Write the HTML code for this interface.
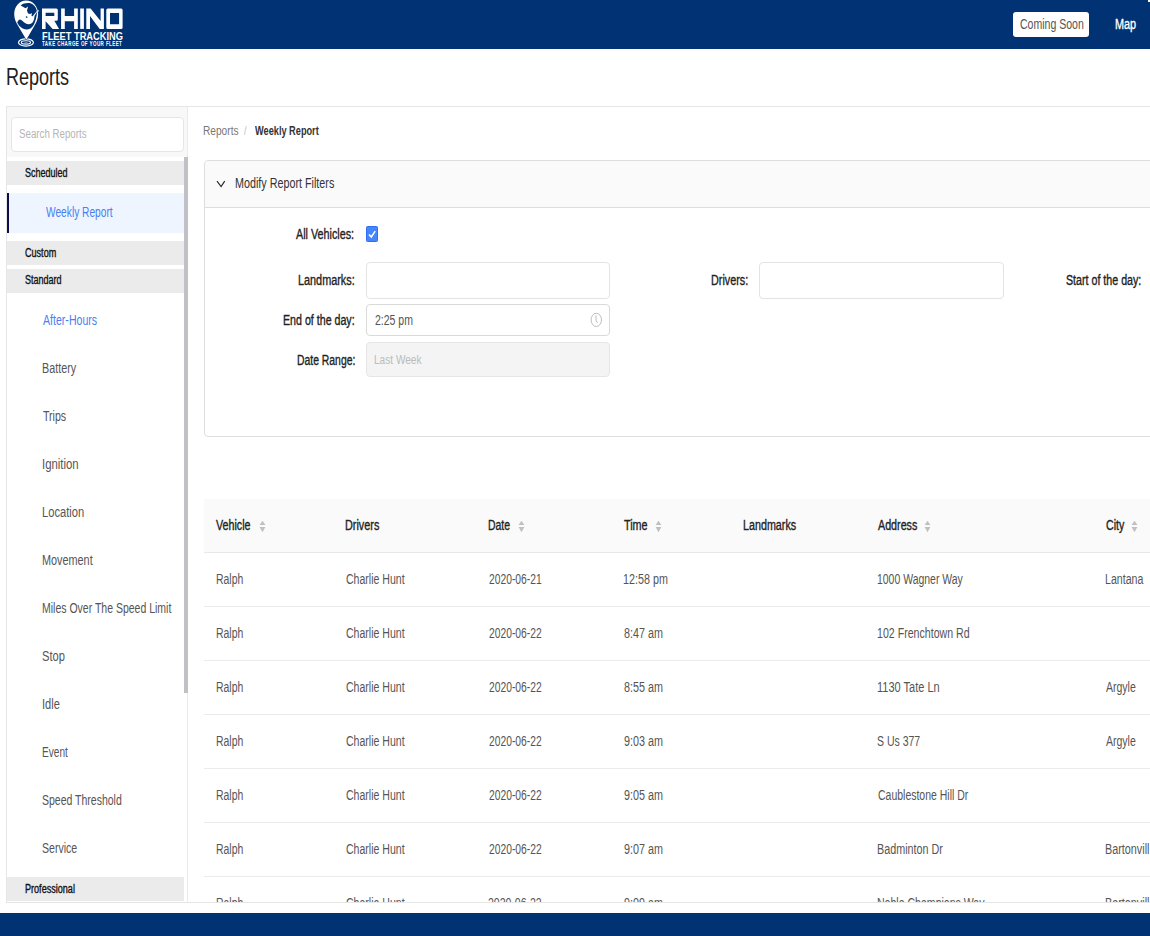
<!DOCTYPE html>
<html><head><meta charset="utf-8"><style>
html,body{margin:0;padding:0;}
body{width:1150px;height:936px;position:relative;overflow:hidden;background:#fff;font-family:"Liberation Sans",sans-serif;}
.t{position:absolute;white-space:pre;transform-origin:0 0;}
.b{position:absolute;box-sizing:border-box;}
</style></head><body>
<!-- header -->
<div class="b" style="left:0;top:0;width:1150px;height:49px;background:#003274"></div>
<svg style="position:absolute;left:0;top:0" width="140" height="48" viewBox="0 0 140 48">
  <g fill="none" stroke="#fff">
    <ellipse cx="25.95" cy="42.45" rx="7.45" ry="3.65" stroke-width="1.2"/>
    <ellipse cx="25.95" cy="42.4" rx="4.6" ry="1.7" stroke-width="1.1"/>
    <ellipse cx="26" cy="43.2" rx="1.8" ry="0.6" stroke-width="0.8" stroke="#8fa3c4"/>
  </g>
  <path d="M26.2 0.6 C33 0.6 38.1 6.5 38.1 14.2 C38.1 19 36.2 23 34 26.5 L26.3 39.7 L18.5 26.5 C16.3 23 14.2 19 14.2 14.2 C14.2 6.5 19.4 0.6 26.2 0.6 Z" fill="#fff" stroke="#003274" stroke-width="1" paint-order="stroke"/>
  <path d="M20.7 5.4 C23 3.5 27 2.7 30.5 3.3 C33.5 4.1 35.6 6.6 36.6 10 L36.9 10.9 L32.6 16.3 L31.5 16 L31.9 13.1 L30.3 14.1 L28 13.5 L27 10.6 L28.1 6.6 L25.5 8.3 Z" fill="#003274"/>
  <path d="M17.2 22.6 C17.8 21 18.8 19.7 20 19.5 C21.5 19.7 23 21.8 25 23 C27 24.3 29.5 24.6 31.3 23.6 C32.8 22.6 33.8 20.5 34.2 18.5 L34.6 15.8 L37.2 11.8 C36.6 17 35.6 21.5 33.8 24.8 C31.8 28.2 29.3 29.5 26.5 29.5 C22.5 29.5 18.9 26.3 17.2 22.6 Z" fill="#003274"/>
  <circle cx="26.6" cy="17" r="0.85" fill="#003274"/>
  <path d="M37 10.8 L38.9 9.9 L38.2 12 Z" fill="#fff"/>
  <g fill="#fff" fill-rule="evenodd">
    <path d="M42 8.5 H56.3 Q57.8 8.5 57.8 10 V19.3 Q57.8 20.8 56.3 20.8 H54.3 L59.1 28.9 H52.6 L45.6 21.2 V28.9 H42 Z M45.6 12.8 H54.3 V15.9 H45.6 Z"/>
    <path d="M61.1 8.5 H64.8 V15.9 H74.1 V8.5 H77.8 V28.9 H74.1 V21.3 H64.8 V28.9 H61.1 Z"/>
    <path d="M80.2 8.5 H83.9 V28.9 H80.2 Z"/>
    <path d="M86.3 8.5 H90.6 L100.6 21 V8.5 H103.9 V28.9 H99.7 L90 15.9 V28.9 H86.3 Z"/>
    <path d="M107.8 8.5 H121.1 Q122.6 8.5 122.6 10 V27.4 Q122.6 28.9 121.1 28.9 H107.8 Q106.3 28.9 106.3 27.4 V10 Q106.3 8.5 107.8 8.5 Z M110 13 V24.3 H119.1 V13 Z"/>
  </g>
</svg>
<div class="b" style="left:1013px;top:12px;width:76px;height:25px;background:#fff;border-radius:3px"></div>
<div class="b" style="left:1148px;top:0;width:2px;height:2px;background:#fff"></div>
<!-- page area borders -->
<div class="b" style="left:6px;top:106px;width:1150px;height:797px;border:1px solid #e6e6e6;"></div>
<!-- sidebar -->
<div class="b" style="left:7px;top:107px;width:181px;height:50px;background:#f8f8f8"></div>
<div class="b" style="left:11px;top:117px;width:173px;height:35px;background:#fff;border:1px solid #e6e6e6;border-radius:4px"></div>
<div class="b" style="left:187px;top:107px;width:1px;height:795px;background:#eaeaea"></div>
<div class="b" style="left:7px;top:161px;width:177px;height:24px;background:#ebebeb"></div>
<div class="b" style="left:7px;top:193px;width:177px;height:40px;background:#eef5fe;border-left:2px solid #0c0c4e"></div>
<div class="b" style="left:7px;top:241px;width:177px;height:24px;background:#ebebeb"></div>
<div class="b" style="left:7px;top:269px;width:177px;height:24px;background:#ebebeb"></div>
<div class="b" style="left:7px;top:877px;width:177px;height:24px;background:#ebebeb"></div>
<div class="b" style="left:184px;top:157px;width:4px;height:536px;background:#c1c1c5"></div>
<!-- filter panel -->
<div class="b" style="left:204px;top:160px;width:960px;height:277px;border:1px solid #dedede;border-radius:4px;background:#fff"></div>
<div class="b" style="left:205px;top:161px;width:960px;height:47px;background:#fafafa;border-bottom:1px solid #dedede;border-radius:4px 0 0 0"></div>
<svg style="position:absolute;left:215px;top:178px" width="12" height="12" viewBox="0 0 12 12"><path d="M2.0 3.1 L6.1 8.6 L9.7 3.1" fill="none" stroke="#222" stroke-width="1.1"/></svg>
<div class="b" style="left:366px;top:226px;width:12px;height:16px;background:#4785fb;border:1px solid #2f6ff7;border-radius:1.5px"></div>
<svg style="position:absolute;left:366px;top:226px" width="12" height="16" viewBox="0 0 12 16"><path d="M3 8.4 L5.3 11 L9.2 5.2" fill="none" stroke="#fff" stroke-width="1.5"/></svg>
<div class="b" style="left:366px;top:262px;width:244px;height:37px;border:1px solid #e3e3e3;border-radius:4px"></div>
<div class="b" style="left:759px;top:262px;width:245px;height:37px;border:1px solid #e3e3e3;border-radius:4px"></div>
<div class="b" style="left:366px;top:304px;width:244px;height:32px;border:1px solid #d9d9d9;border-radius:4px"></div>
<svg style="position:absolute;left:588px;top:311px" width="17" height="18" viewBox="0 0 17 18"><ellipse cx="8.3" cy="8.9" rx="5.2" ry="6.6" fill="none" stroke="#bdbdbd" stroke-width="1"/><path d="M8 4.5 V9.6 L9.6 12" fill="none" stroke="#bdbdbd" stroke-width="1"/></svg>
<div class="b" style="left:366px;top:342px;width:244px;height:35px;border:1px solid #e6e6e6;border-radius:4px;background:#f4f4f4"></div>
<!-- table -->
<div class="b" style="left:204px;top:499px;width:946px;height:54px;background:#fafafa;border-bottom:1px solid #e8e8e8"></div>
<div class="b" style="left:204px;top:606px;width:946px;height:1px;background:#ebebeb"></div>
<div class="b" style="left:204px;top:660px;width:946px;height:1px;background:#ebebeb"></div>
<div class="b" style="left:204px;top:714px;width:946px;height:1px;background:#ebebeb"></div>
<div class="b" style="left:204px;top:768px;width:946px;height:1px;background:#ebebeb"></div>
<div class="b" style="left:204px;top:822px;width:946px;height:1px;background:#ebebeb"></div>
<div class="b" style="left:204px;top:876px;width:946px;height:1px;background:#ebebeb"></div>
<svg style="position:absolute;left:258.6px;top:520px" width="7" height="13" viewBox="0 0 7 13"><path d="M0.6 5 L3.5 0.7 L6.4 5 Z M0.6 7 L6.4 7 L3.5 12.2 Z" fill="#c0c0c0"/></svg>
<svg style="position:absolute;left:517.5px;top:520px" width="7" height="13" viewBox="0 0 7 13"><path d="M0.6 5 L3.5 0.7 L6.4 5 Z M0.6 7 L6.4 7 L3.5 12.2 Z" fill="#c0c0c0"/></svg>
<svg style="position:absolute;left:655.1px;top:520px" width="7" height="13" viewBox="0 0 7 13"><path d="M0.6 5 L3.5 0.7 L6.4 5 Z M0.6 7 L6.4 7 L3.5 12.2 Z" fill="#c0c0c0"/></svg>
<svg style="position:absolute;left:924.2px;top:520px" width="7" height="13" viewBox="0 0 7 13"><path d="M0.6 5 L3.5 0.7 L6.4 5 Z M0.6 7 L6.4 7 L3.5 12.2 Z" fill="#c0c0c0"/></svg>
<svg style="position:absolute;left:1131.2px;top:520px" width="7" height="13" viewBox="0 0 7 13"><path d="M0.6 5 L3.5 0.7 L6.4 5 Z M0.6 7 L6.4 7 L3.5 12.2 Z" fill="#c0c0c0"/></svg>

<!-- clip bottom -->
<div class="b" style="left:188px;top:902px;width:962px;height:34px;background:#fff;z-index:5;border-top:1px solid #e6e6e6"></div>
<div class="b" style="left:0;top:913px;width:1150px;height:23px;background:#003274;z-index:6"></div>

<div class="t" id="t0" style="left:1020.00px;top:17.10px;font-size:14px;line-height:14px;font-weight:400;color:#555;transform:scaleX(0.7525);">Coming Soon</div>
<div class="t" id="t1" style="left:1115.20px;top:17.10px;font-size:14px;line-height:14px;font-weight:400;color:#fff;transform:scaleX(0.7755);-webkit-text-stroke:0.35px #fff;">Map</div>
<div class="t" id="t2" style="left:42.00px;top:30.62px;font-size:10.8px;line-height:10.8px;font-weight:700;color:#fff;transform:scaleX(0.8601);">FLEET TRACKING</div>
<div class="t" id="t3" style="left:42.10px;top:41.30px;font-size:6.7px;line-height:6.7px;font-weight:700;color:#fff;transform:scaleX(0.6759);letter-spacing:0.6px;">TAKE CHARGE OF YOUR FLEET</div>
<div class="t" id="t4" style="left:6.00px;top:65.30px;font-size:24px;line-height:24px;font-weight:400;color:#212121;transform:scaleX(0.7506);">Reports</div>
<div class="t" id="t5" style="left:19.00px;top:128.30px;font-size:12px;line-height:12px;font-weight:400;color:#b5b5b5;transform:scaleX(0.8105);">Search Reports</div>
<div class="t" id="t6" style="left:25.00px;top:166.50px;font-size:12px;line-height:12px;font-weight:400;color:#111;transform:scaleX(0.7500);-webkit-text-stroke:0.35px #111;">Scheduled</div>
<div class="t" id="t7" style="left:46.00px;top:205.10px;font-size:14px;line-height:14px;font-weight:400;color:#4a7ef2;transform:scaleX(0.7283);">Weekly Report</div>
<div class="t" id="t8" style="left:25.00px;top:246.70px;font-size:12px;line-height:12px;font-weight:400;color:#111;transform:scaleX(0.7554);-webkit-text-stroke:0.35px #111;">Custom</div>
<div class="t" id="t9" style="left:25.00px;top:274.30px;font-size:12px;line-height:12px;font-weight:400;color:#111;transform:scaleX(0.7500);-webkit-text-stroke:0.35px #111;">Standard</div>
<div class="t" id="t10" style="left:43.20px;top:312.90px;font-size:14px;line-height:14px;font-weight:400;color:#4a7ef2;transform:scaleX(0.7560);">After-Hours</div>
<div class="t" id="t11" style="left:42.20px;top:360.90px;font-size:14px;line-height:14px;font-weight:400;color:#555;transform:scaleX(0.7693);">Battery</div>
<div class="t" id="t12" style="left:43.20px;top:408.90px;font-size:14px;line-height:14px;font-weight:400;color:#555;transform:scaleX(0.7576);">Trips</div>
<div class="t" id="t13" style="left:42.20px;top:456.90px;font-size:14px;line-height:14px;font-weight:400;color:#555;transform:scaleX(0.8113);">Ignition</div>
<div class="t" id="t14" style="left:42.20px;top:504.90px;font-size:14px;line-height:14px;font-weight:400;color:#555;transform:scaleX(0.7977);">Location</div>
<div class="t" id="t15" style="left:42.20px;top:552.90px;font-size:14px;line-height:14px;font-weight:400;color:#555;transform:scaleX(0.7752);">Movement</div>
<div class="t" id="t16" style="left:42.20px;top:600.90px;font-size:14px;line-height:14px;font-weight:400;color:#555;transform:scaleX(0.7500);">Miles Over The Speed Limit</div>
<div class="t" id="t17" style="left:42.20px;top:648.90px;font-size:14px;line-height:14px;font-weight:400;color:#555;transform:scaleX(0.7957);">Stop</div>
<div class="t" id="t18" style="left:42.20px;top:696.90px;font-size:14px;line-height:14px;font-weight:400;color:#555;transform:scaleX(0.7891);">Idle</div>
<div class="t" id="t19" style="left:42.20px;top:744.90px;font-size:14px;line-height:14px;font-weight:400;color:#555;transform:scaleX(0.7212);">Event</div>
<div class="t" id="t20" style="left:42.20px;top:792.90px;font-size:14px;line-height:14px;font-weight:400;color:#555;transform:scaleX(0.7501);">Speed Threshold</div>
<div class="t" id="t21" style="left:42.20px;top:840.90px;font-size:14px;line-height:14px;font-weight:400;color:#555;transform:scaleX(0.7547);">Service</div>
<div class="t" id="t22" style="left:25.40px;top:882.70px;font-size:12px;line-height:12px;font-weight:400;color:#111;transform:scaleX(0.7562);-webkit-text-stroke:0.35px #111;">Professional</div>
<div class="t" id="t23" style="left:202.70px;top:124.50px;font-size:12px;line-height:12px;font-weight:400;color:#777;transform:scaleX(0.8453);">Reports</div>
<div class="t" id="t24" style="left:244.10px;top:124.50px;font-size:12px;line-height:12px;font-weight:400;color:#bbb;transform:scaleX(0.7500);">/</div>
<div class="t" id="t25" style="left:254.90px;top:124.50px;font-size:12px;line-height:12px;font-weight:700;color:#333;transform:scaleX(0.7670);">Weekly Report</div>
<div class="t" id="t26" style="left:234.80px;top:176.10px;font-size:14px;line-height:14px;font-weight:400;color:#333;transform:scaleX(0.7690);">Modify Report Filters</div>
<div class="t" id="t27" style="left:295.70px;top:226.90px;font-size:14px;line-height:14px;font-weight:400;color:#222;transform:scaleX(0.7688);-webkit-text-stroke:0.35px #222;">All Vehicles:</div>
<div class="t" id="t28" style="left:297.90px;top:272.50px;font-size:14px;line-height:14px;font-weight:400;color:#222;transform:scaleX(0.7757);-webkit-text-stroke:0.35px #222;">Landmarks:</div>
<div class="t" id="t29" style="left:283.10px;top:313.10px;font-size:14px;line-height:14px;font-weight:400;color:#222;transform:scaleX(0.7609);-webkit-text-stroke:0.35px #222;">End of the day:</div>
<div class="t" id="t30" style="left:296.80px;top:352.70px;font-size:14px;line-height:14px;font-weight:400;color:#222;transform:scaleX(0.7421);-webkit-text-stroke:0.35px #222;">Date Range:</div>
<div class="t" id="t31" style="left:375.00px;top:312.50px;font-size:14px;line-height:14px;font-weight:400;color:#555;transform:scaleX(0.7500);">2:25 pm</div>
<div class="t" id="t32" style="left:374.00px;top:353.80px;font-size:12px;line-height:12px;font-weight:400;color:#bbb;transform:scaleX(0.8415);">Last Week</div>
<div class="t" id="t33" style="left:711.00px;top:273.10px;font-size:14px;line-height:14px;font-weight:400;color:#222;transform:scaleX(0.7719);-webkit-text-stroke:0.35px #222;">Drivers:</div>
<div class="t" id="t34" style="left:1065.60px;top:273.00px;font-size:14px;line-height:14px;font-weight:400;color:#222;transform:scaleX(0.7622);-webkit-text-stroke:0.35px #222;">Start of the day:</div>
<div class="t" id="t35" style="left:216.00px;top:518.00px;font-size:14px;line-height:14px;font-weight:400;color:#222;transform:scaleX(0.7636);-webkit-text-stroke:0.35px #222;">Vehicle</div>
<div class="t" id="t36" style="left:344.60px;top:518.00px;font-size:14px;line-height:14px;font-weight:400;color:#222;transform:scaleX(0.7740);-webkit-text-stroke:0.35px #222;">Drivers</div>
<div class="t" id="t37" style="left:488.30px;top:518.00px;font-size:14px;line-height:14px;font-weight:400;color:#222;transform:scaleX(0.7441);-webkit-text-stroke:0.35px #222;">Date</div>
<div class="t" id="t38" style="left:624.10px;top:518.00px;font-size:14px;line-height:14px;font-weight:400;color:#222;transform:scaleX(0.7698);-webkit-text-stroke:0.35px #222;">Time</div>
<div class="t" id="t39" style="left:742.50px;top:518.00px;font-size:14px;line-height:14px;font-weight:400;color:#222;transform:scaleX(0.7678);-webkit-text-stroke:0.35px #222;">Landmarks</div>
<div class="t" id="t40" style="left:878.20px;top:518.00px;font-size:14px;line-height:14px;font-weight:400;color:#222;transform:scaleX(0.7660);-webkit-text-stroke:0.35px #222;">Address</div>
<div class="t" id="t41" style="left:1105.50px;top:518.00px;font-size:14px;line-height:14px;font-weight:400;color:#222;transform:scaleX(0.7592);-webkit-text-stroke:0.35px #222;">City</div>
<div class="t" id="t42" style="left:215.50px;top:572.10px;font-size:14px;line-height:14px;font-weight:400;color:#555;transform:scaleX(0.7447);">Ralph</div>
<div class="t" id="t43" style="left:345.60px;top:572.10px;font-size:14px;line-height:14px;font-weight:400;color:#555;transform:scaleX(0.7527);">Charlie Hunt</div>
<div class="t" id="t44" style="left:489.30px;top:572.10px;font-size:14px;line-height:14px;font-weight:400;color:#555;transform:scaleX(0.7358);">2020-06-21</div>
<div class="t" id="t45" style="left:623.10px;top:572.10px;font-size:14px;line-height:14px;font-weight:400;color:#555;transform:scaleX(0.7682);">12:58 pm</div>
<div class="t" id="t46" style="left:877.20px;top:572.10px;font-size:14px;line-height:14px;font-weight:400;color:#555;transform:scaleX(0.7465);">1000 Wagner Way</div>
<div class="t" id="t47" style="left:1104.50px;top:572.10px;font-size:14px;line-height:14px;font-weight:400;color:#555;transform:scaleX(0.7582);">Lantana</div>
<div class="t" id="t48" style="left:215.50px;top:626.10px;font-size:14px;line-height:14px;font-weight:400;color:#555;transform:scaleX(0.7447);">Ralph</div>
<div class="t" id="t49" style="left:345.60px;top:626.10px;font-size:14px;line-height:14px;font-weight:400;color:#555;transform:scaleX(0.7527);">Charlie Hunt</div>
<div class="t" id="t50" style="left:489.30px;top:626.10px;font-size:14px;line-height:14px;font-weight:400;color:#555;transform:scaleX(0.7358);">2020-06-22</div>
<div class="t" id="t51" style="left:624.10px;top:626.10px;font-size:14px;line-height:14px;font-weight:400;color:#555;transform:scaleX(0.7703);">8:47 am</div>
<div class="t" id="t52" style="left:877.20px;top:626.10px;font-size:14px;line-height:14px;font-weight:400;color:#555;transform:scaleX(0.7583);">102 Frenchtown Rd</div>
<div class="t" id="t53" style="left:215.50px;top:680.10px;font-size:14px;line-height:14px;font-weight:400;color:#555;transform:scaleX(0.7447);">Ralph</div>
<div class="t" id="t54" style="left:345.60px;top:680.10px;font-size:14px;line-height:14px;font-weight:400;color:#555;transform:scaleX(0.7527);">Charlie Hunt</div>
<div class="t" id="t55" style="left:489.30px;top:680.10px;font-size:14px;line-height:14px;font-weight:400;color:#555;transform:scaleX(0.7358);">2020-06-22</div>
<div class="t" id="t56" style="left:624.10px;top:680.10px;font-size:14px;line-height:14px;font-weight:400;color:#555;transform:scaleX(0.7703);">8:55 am</div>
<div class="t" id="t57" style="left:877.20px;top:680.10px;font-size:14px;line-height:14px;font-weight:400;color:#555;transform:scaleX(0.7863);">1130 Tate Ln</div>
<div class="t" id="t58" style="left:1105.50px;top:680.10px;font-size:14px;line-height:14px;font-weight:400;color:#555;transform:scaleX(0.7506);">Argyle</div>
<div class="t" id="t59" style="left:215.50px;top:734.10px;font-size:14px;line-height:14px;font-weight:400;color:#555;transform:scaleX(0.7447);">Ralph</div>
<div class="t" id="t60" style="left:345.60px;top:734.10px;font-size:14px;line-height:14px;font-weight:400;color:#555;transform:scaleX(0.7527);">Charlie Hunt</div>
<div class="t" id="t61" style="left:489.30px;top:734.10px;font-size:14px;line-height:14px;font-weight:400;color:#555;transform:scaleX(0.7358);">2020-06-22</div>
<div class="t" id="t62" style="left:624.10px;top:734.10px;font-size:14px;line-height:14px;font-weight:400;color:#555;transform:scaleX(0.7703);">9:03 am</div>
<div class="t" id="t63" style="left:877.20px;top:734.10px;font-size:14px;line-height:14px;font-weight:400;color:#555;transform:scaleX(0.7503);">S Us 377</div>
<div class="t" id="t64" style="left:1105.50px;top:734.10px;font-size:14px;line-height:14px;font-weight:400;color:#555;transform:scaleX(0.7506);">Argyle</div>
<div class="t" id="t65" style="left:215.50px;top:788.10px;font-size:14px;line-height:14px;font-weight:400;color:#555;transform:scaleX(0.7447);">Ralph</div>
<div class="t" id="t66" style="left:345.60px;top:788.10px;font-size:14px;line-height:14px;font-weight:400;color:#555;transform:scaleX(0.7527);">Charlie Hunt</div>
<div class="t" id="t67" style="left:489.30px;top:788.10px;font-size:14px;line-height:14px;font-weight:400;color:#555;transform:scaleX(0.7358);">2020-06-22</div>
<div class="t" id="t68" style="left:624.10px;top:788.10px;font-size:14px;line-height:14px;font-weight:400;color:#555;transform:scaleX(0.7703);">9:05 am</div>
<div class="t" id="t69" style="left:878.20px;top:788.10px;font-size:14px;line-height:14px;font-weight:400;color:#555;transform:scaleX(0.7484);">Caublestone Hill Dr</div>
<div class="t" id="t70" style="left:215.50px;top:842.10px;font-size:14px;line-height:14px;font-weight:400;color:#555;transform:scaleX(0.7447);">Ralph</div>
<div class="t" id="t71" style="left:345.60px;top:842.10px;font-size:14px;line-height:14px;font-weight:400;color:#555;transform:scaleX(0.7527);">Charlie Hunt</div>
<div class="t" id="t72" style="left:489.30px;top:842.10px;font-size:14px;line-height:14px;font-weight:400;color:#555;transform:scaleX(0.7358);">2020-06-22</div>
<div class="t" id="t73" style="left:624.10px;top:842.10px;font-size:14px;line-height:14px;font-weight:400;color:#555;transform:scaleX(0.7703);">9:07 am</div>
<div class="t" id="t74" style="left:877.20px;top:842.10px;font-size:14px;line-height:14px;font-weight:400;color:#555;transform:scaleX(0.7692);">Badminton Dr</div>
<div class="t" id="t75" style="left:1104.50px;top:842.10px;font-size:14px;line-height:14px;font-weight:400;color:#555;transform:scaleX(0.7716);">Bartonvill</div>
<div class="t" id="t76" style="left:215.50px;top:896.10px;font-size:14px;line-height:14px;font-weight:400;color:#555;transform:scaleX(0.7447);">Ralph</div>
<div class="t" id="t77" style="left:345.60px;top:896.10px;font-size:14px;line-height:14px;font-weight:400;color:#555;transform:scaleX(0.7527);">Charlie Hunt</div>
<div class="t" id="t78" style="left:488.30px;top:896.10px;font-size:14px;line-height:14px;font-weight:400;color:#555;transform:scaleX(0.7500);">2020-06-22</div>
<div class="t" id="t79" style="left:624.10px;top:896.10px;font-size:14px;line-height:14px;font-weight:400;color:#555;transform:scaleX(0.7703);">9:09 am</div>
<div class="t" id="t80" style="left:877.20px;top:896.10px;font-size:14px;line-height:14px;font-weight:400;color:#555;transform:scaleX(0.7536);">Noble Champions Way</div>
<div class="t" id="t81" style="left:1104.50px;top:896.10px;font-size:14px;line-height:14px;font-weight:400;color:#555;transform:scaleX(0.7716);">Bartonvill</div>
</body></html>
